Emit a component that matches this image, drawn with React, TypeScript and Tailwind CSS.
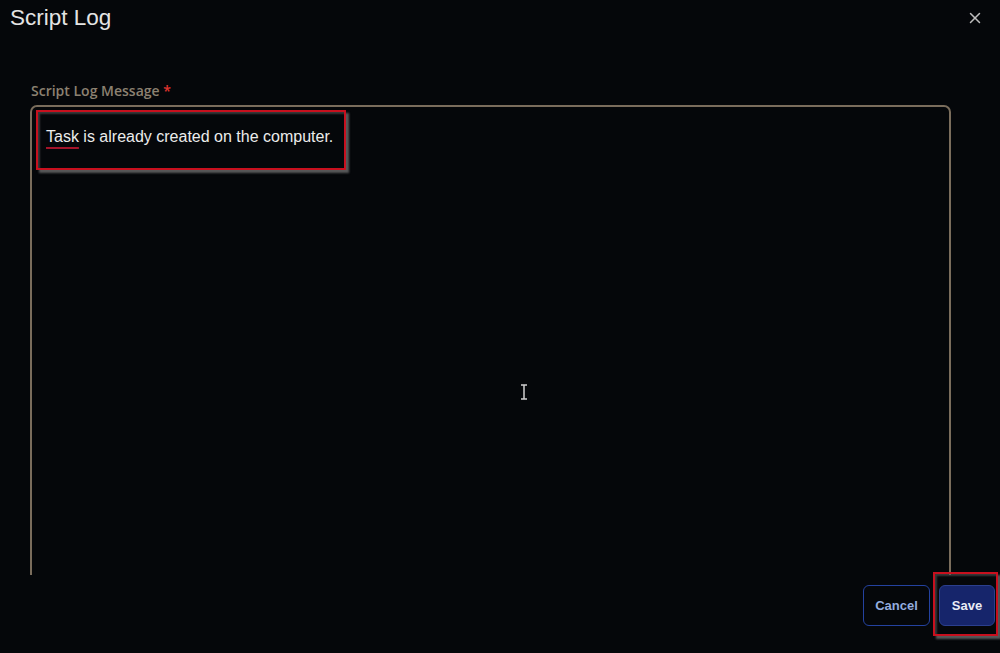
import { X } from "lucide-react";

export default function App() {
  return (
    <div className="flex h-[653px] w-[1000px] flex-col overflow-hidden bg-[#05070a] font-['Liberation_Sans',Arial,sans-serif]">
      {/* header */}
      <div className="flex h-[36px] shrink-0 items-center justify-between pl-[10px] pr-[16px]">
        <h1 className="text-[22.5px] leading-none text-[#e4e4e4]">Script Log</h1>
        <X size={18} strokeWidth={2} className="text-[#bdbdbd]" />
      </div>

      {/* body */}
      <div className="relative flex h-[539px] shrink-0 flex-col overflow-hidden pl-[30px] pr-[49px] pt-[46px]">
        <label className="mb-[5px] h-[18px] pl-[1px] font-['Open_Sans',sans-serif] text-[14px] font-semibold leading-[18px] text-[#8c8171]">
          Script Log Message <span className="text-[#e0342f]">*</span>
        </label>
        <div className="relative h-[520px] shrink-0 rounded-[7px] border-2 border-[#7a6d5c] px-[14px] pt-[20px] text-[16px] leading-[20px] text-[#ececec]">
          <span className="underline decoration-[#a3142a] decoration-2 underline-offset-[5px]">Task</span> is already created on the computer.
          <div className="pointer-events-none absolute left-[4px] top-[3px] h-[60px] w-[310px] border-2 border-[#c8101e] shadow-[3px_3px_2px_rgba(115,115,115,0.75),inset_2px_2px_2px_rgba(90,90,90,0.6)]" />
        </div>
        {/* mouse cursor */}
        <svg className="pointer-events-none absolute left-[519px] top-[348px]" width="10" height="16" viewBox="0 0 10 16">
          <path d="M2 1h6M5 1v14M2 15h6" stroke="#cfcfcf" strokeWidth="1.5" fill="none" />
        </svg>
      </div>

      {/* footer */}
      <div className="flex flex-1 justify-end gap-[9px] pr-[5px] pt-[10px]">
        <button className="h-[41px] w-[67px] rounded-[6px] border border-[#2442a0] bg-transparent text-[13px] font-bold text-[#93acdf]">
          Cancel
        </button>
        <div className="relative">
          <button className="h-[41px] w-[56px] rounded-[6px] border border-[#2b3f8e] bg-[#16256b] text-[13px] font-bold text-[#e9ecf5]">
            Save
          </button>
          <div className="pointer-events-none absolute -left-[6px] -top-[13px] h-[64px] w-[65px] border-2 border-[#c8101e] shadow-[3px_3px_2px_rgba(115,115,115,0.75),inset_2px_2px_2px_rgba(90,90,90,0.6)]" />
        </div>
      </div>
    </div>
  );
}
